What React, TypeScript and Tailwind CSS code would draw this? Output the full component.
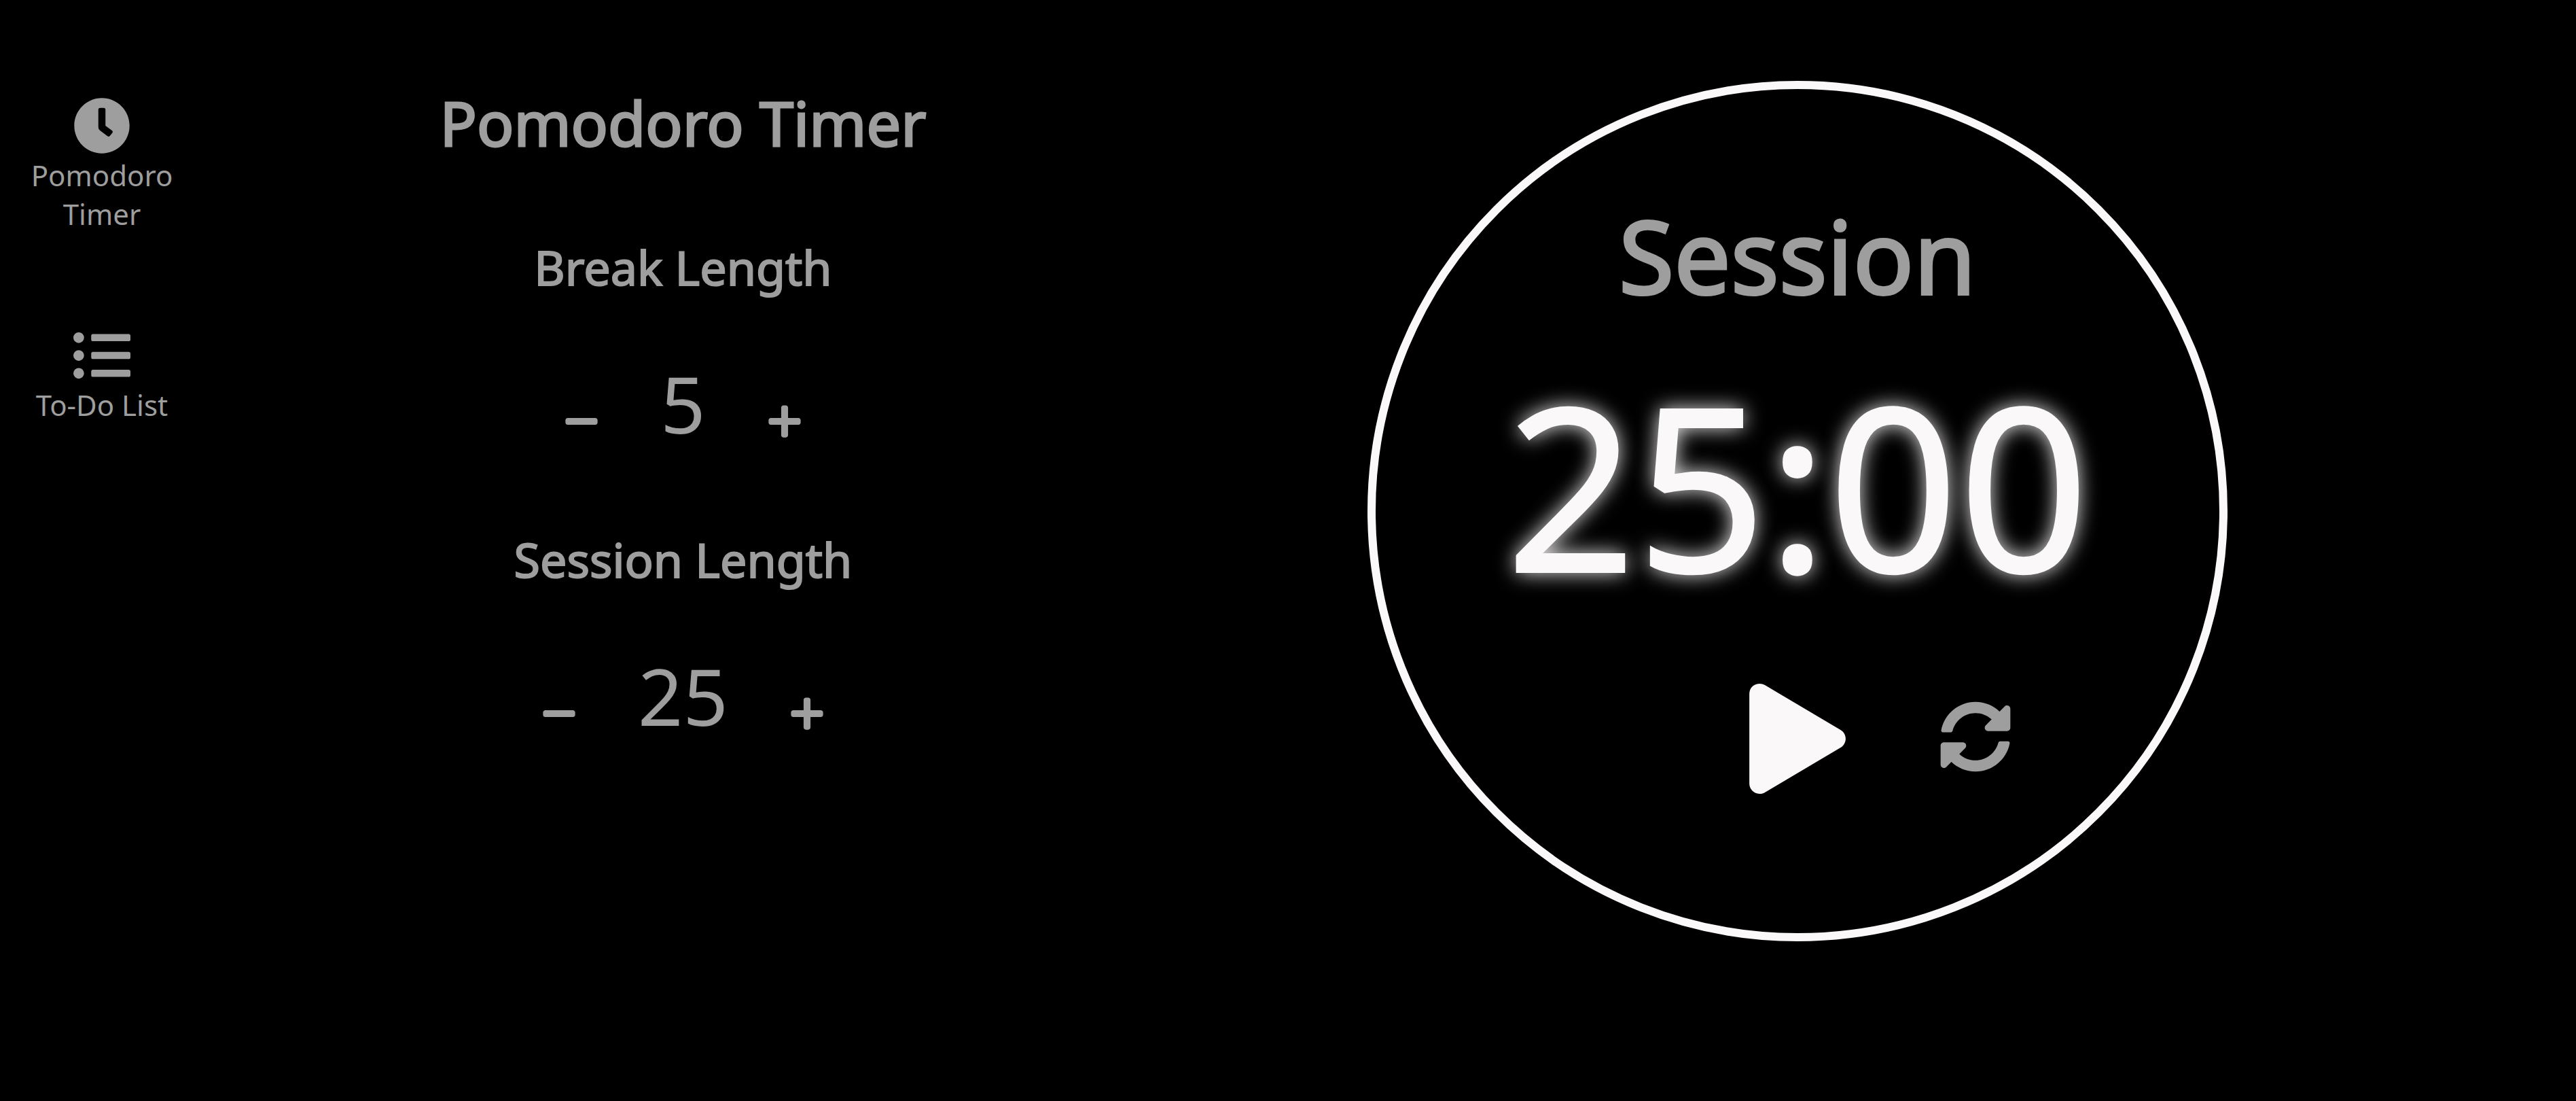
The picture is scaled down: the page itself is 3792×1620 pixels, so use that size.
import type { ReactNode } from "react";
import { FaClock, FaListUl, FaMinus, FaPlus, FaPlay, FaSyncAlt } from "react-icons/fa";

function NavItem({ icon, label }: { icon: ReactNode; label: string }) {
  return (
    <a href="#" className="flex w-[240px] flex-col items-center gap-[2px] text-center text-[42px] leading-[57px]">
      <span className="text-[84px]">{icon}</span>
      {label}
    </a>
  );
}

function LengthControl({ title, value }: { title: string; value: number }) {
  return (
    <section className="flex flex-col items-center">
      <h2 className="text-[70px] leading-[95px] font-normal [-webkit-text-stroke:2px_currentColor]">{title}</h2>
      <div className="mt-[72px] flex items-center gap-[89px]">
        <button type="button" aria-label={`Decrease ${title}`} className="pt-[52px] text-[54px]">
          <FaMinus />
        </button>
        <span className="text-[116px] leading-[161px]">{value}</span>
        <button type="button" aria-label={`Increase ${title}`} className="pt-[52px] text-[54px]">
          <FaPlus />
        </button>
      </div>
    </section>
  );
}

export default function App() {
  return (
    <div className="flex min-h-screen bg-black font-['Noto_Sans',sans-serif] text-[#9e9e9e]">
      <nav className="flex w-[300px] shrink-0 flex-col items-center gap-[138px] pt-[143px]">
        <NavItem icon={<FaClock />} label="Pomodoro Timer" />
        <NavItem icon={<FaListUl />} label="To-Do List" />
      </nav>
      <main className="flex flex-1 pr-[211px]">
        <div className="flex w-[43%] flex-col items-center pt-[119px]">
          <h1 className="text-[90px] leading-[123px] font-normal [-webkit-text-stroke:3px_currentColor]">
            Pomodoro Timer
          </h1>
          <div className="mt-[104px] flex flex-col gap-[102px]">
            <LengthControl title="Break Length" value={5} />
            <LengthControl title="Session Length" value={25} />
          </div>
        </div>
        <div className="flex flex-1 justify-center pt-[119px]">
          <div className="flex size-[1266px] flex-col items-center rounded-full border-[12px] border-[#faf8f9] pt-[144px]">
            <h2 className="text-[148px] leading-[202px] font-normal [-webkit-text-stroke:4px_currentColor]">Session</h2>
            <time className="mt-[5px] text-[336px] leading-[460px] text-[#faf8f9] [-webkit-text-stroke:2px_currentColor] [text-shadow:0_0_30px_#faf8f9]">
              25:00
            </time>
            <div className="mt-[64px] grid w-full grid-cols-[1fr_auto_1fr] items-center">
              <button type="button" aria-label="Start" className="col-start-2 text-[162px] text-[#faf8f9]">
                <FaPlay className="w-[142px]" />
              </button>
              <button type="button" aria-label="Reset" className="ml-[138px] justify-self-start pb-[6px] text-[106px]">
                <FaSyncAlt />
              </button>
            </div>
          </div>
        </div>
      </main>
    </div>
  );
}
